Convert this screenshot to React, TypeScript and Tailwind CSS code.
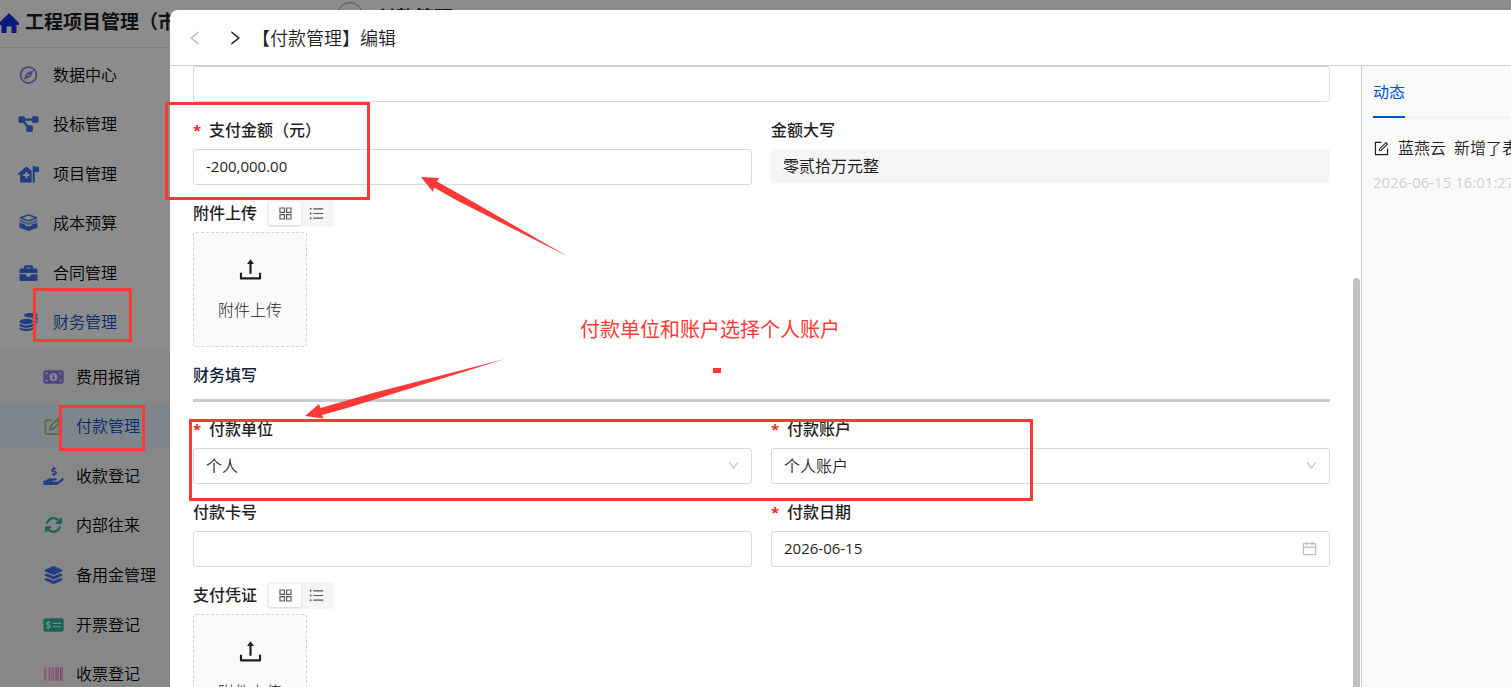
import type { ReactNode } from "react";
import type { IconType } from "react-icons";
import {
  AiOutlineAppstore,
  AiOutlineCalendar,
  AiOutlineDown,
  AiOutlineForm,
  AiOutlineLeft,
  AiOutlineRight,
  AiOutlineUnorderedList,
  AiOutlineUpload,
} from "react-icons/ai";
import { FaBarcode, FaBriefcase, FaCoins, FaHandHoldingUsd, FaLayerGroup, FaRegCompass } from "react-icons/fa";
import {
  FaArrowsRotate,
  FaDiagramProject,
  FaHouseMedicalFlag,
  FaMoneyBill1,
  FaMoneyCheckDollar,
  FaRegPenToSquare,
} from "react-icons/fa6";
import { LuChevronsLeft } from "react-icons/lu";

function OpenBox({ className }: { className?: string }) {
  return (
    <svg viewBox="0 0 22 20" className={className} fill="currentColor" aria-hidden="true">
      <path d="M11 1 20 4.2 11 7.6 2 4.2Z" fill="none" stroke="currentColor" strokeWidth="1.6" strokeLinejoin="round" />
      <path d="M1 5.6 11 9.4 21 5.6V9L11 12.6 1 9Z" fillOpacity=".55" />
      <path d="M1 9.6 6.5 11.5 8.6 13.6H13.4L15.5 11.5 21 9.6V15.4L11 19 1 15.4Z" />
    </svg>
  );
}

function HomeIcon({ className }: { className?: string }) {
  return (
    <svg viewBox="0 0 20 20" className={className} fill="currentColor" aria-hidden="true">
      <path d="M10 0 20 10V12H17.500V20H12.500V13.500H7.500V20H2.500V12H0V10Z" />
    </svg>
  );
}

type Item = { label: string; icon: IconType | typeof OpenBox; color: string; active?: boolean };

const mainItems: Item[] = [
  { label: "数据中心", icon: FaRegCompass, color: "text-[#8f78f0]" },
  { label: "投标管理", icon: FaDiagramProject, color: "text-[#3b71e8]" },
  { label: "项目管理", icon: FaHouseMedicalFlag, color: "text-[#3b71e8]" },
  { label: "成本预算", icon: OpenBox, color: "text-[#3b71e8]" },
  { label: "合同管理", icon: FaBriefcase, color: "text-[#3b71e8]" },
  { label: "财务管理", icon: FaCoins, color: "text-[#3b71e8]", active: true },
];

const subItems: Item[] = [
  { label: "费用报销", icon: FaMoneyBill1, color: "text-[#8f78f0]" },
  { label: "付款管理", icon: FaRegPenToSquare, color: "text-[#93c772]", active: true },
  { label: "收款登记", icon: FaHandHoldingUsd, color: "text-[#3b71e8]" },
  { label: "内部往来", icon: FaArrowsRotate, color: "text-[#2bb795]" },
  { label: "备用金管理", icon: FaLayerGroup, color: "text-[#3b71e8]" },
  { label: "开票登记", icon: FaMoneyCheckDollar, color: "text-[#2bb795]" },
  { label: "收票登记", icon: FaBarcode, color: "text-[#e86fb0]" },
];

function Sidebar() {
  return (
    <aside className="w-60 shrink-0 bg-white">
      <div className="flex h-12 items-center gap-1.5 border-b border-[#e4e4e4] pb-0.5">
        <HomeIcon className="-ml-px size-5 text-[#1632e0]" />
        <span className="text-[19px] font-bold whitespace-nowrap">工程项目管理（市</span>
      </div>
      <nav className="pt-0.5 font-[350] text-black">
        <ul className="grid h-[297px] grid-rows-6">
          {mainItems.map(({ label, icon: Icon, color, active }) => (
            <li key={label}>
              <a href="#" className="flex h-full items-center gap-3.5 pl-[18px]">
                <Icon className={`h-[18px] w-[21px] ${color}`} />
                <span className={active ? "text-[#0052cc]" : ""}>{label}</span>
              </a>
            </li>
          ))}
        </ul>
        <ul className="mt-0.5 grid h-[353px] grid-rows-7 bg-[#f6f6f6] pt-[3px] pb-[3px]">
          {subItems.map(({ label, icon: Icon, color, active }) => (
            <li key={label} className="flex items-center">
              <a href="#" className={`flex h-[45px] w-full items-center gap-3 pl-[43px] ${active ? "bg-[#e6f4ff]" : ""}`}>
                <Icon className={`h-[18px] w-[21px] ${color}`} />
                <span className={active ? "text-[#0052cc]" : ""}>{label}</span>
              </a>
            </li>
          ))}
        </ul>
      </nav>
    </aside>
  );
}

const labelText = "flex h-[38px] items-center font-medium";
const controlBase =
  "block h-9 w-full shrink-0 appearance-none rounded-[3px] border border-[#d9d9d9] bg-white px-3 outline-none";
const textControl = `${controlBase} pb-0.5 text-[15px]`;
const selectControl = `${controlBase} font-[350]`;

function Star() {
  return <span className="w-4 text-[15px] font-bold text-[#ff1f1f]">*</span>;
}

function Field({ id, label, required, children }: { id: string; label: string; required?: boolean; children: ReactNode }) {
  return (
    <div>
      <label htmlFor={id} className={labelText}>
        {required && <Star />}
        {label}
      </label>
      <div className="relative">{children}</div>
    </div>
  );
}

function Upload({ label }: { label: string }) {
  return (
    <section>
      <div className={labelText}>
        <span>{label}</span>
        <div className="ml-2.5 flex h-[27px] w-[67px] rounded-[3px] bg-[#f5f5f5] p-0.5 text-[#555]">
          <button type="button" aria-label="网格" className="flex w-8 items-center justify-center rounded-[2px] bg-white shadow-sm">
            <AiOutlineAppstore className="size-[17px]" />
          </button>
          <button type="button" aria-label="列表" className="flex flex-1 items-center justify-center">
            <AiOutlineUnorderedList className="size-[17px]" />
          </button>
        </div>
      </div>
      <button
        type="button"
        className="flex h-[115px] w-[114px] flex-col items-center justify-center gap-3.5 rounded-[3px] border border-dashed border-[#d4d4d4] bg-[#fafafa] pb-0.5 font-light"
      >
        <AiOutlineUpload className="size-[29px]" />
        <span className="leading-6">附件上传</span>
      </button>
    </section>
  );
}

function PaymentForm() {
  return (
    <form className="flex min-w-0 flex-1 flex-col gap-[9px] pr-[23px] pl-[23px]">
      <input aria-label="备注" className={textControl} />
      <div className="grid grid-cols-2 gap-x-[19px]">
        <Field id="amount" label="支付金额（元）" required>
          <input id="amount" defaultValue="-200,000.00" className={textControl} />
        </Field>
        <Field id="capital" label="金额大写">
          <output id="capital" className="flex h-[34px] items-center rounded-[3px] bg-[#f5f5f5] px-3">
            零贰拾万元整
          </output>
        </Field>
      </div>
      <Upload label="附件上传" />
      <h2 className="mb-[-1px] border-b-3 border-[#c9ccd3] pb-[5px] text-[#141f38]">
        <span className={labelText}>财务填写</span>
      </h2>
      <div className="grid grid-cols-2 gap-x-[19px] gap-y-[9px]">
        <Field id="unit" label="付款单位" required>
          <select id="unit" className={selectControl}>
            <option>个人</option>
          </select>
          <AiOutlineDown className="pointer-events-none absolute top-[11px] right-3 size-[13px] text-[#bdbdbd]" />
        </Field>
        <Field id="account" label="付款账户" required>
          <select id="account" className={selectControl}>
            <option>个人账户</option>
          </select>
          <AiOutlineDown className="pointer-events-none absolute top-[11px] right-3 size-[13px] text-[#bdbdbd]" />
        </Field>
        <Field id="card" label="付款卡号">
          <input id="card" className={textControl} />
        </Field>
        <Field id="date" label="付款日期" required>
          <input id="date" defaultValue="2026-06-15" className={textControl} />
          <AiOutlineCalendar className="pointer-events-none absolute top-[9px] right-3 size-[17px] text-[#bdbdbd]" />
        </Field>
      </div>
      <Upload label="支付凭证" />
    </form>
  );
}

function Activity() {
  return (
    <aside className="w-[150px] shrink-0 overflow-hidden border-l border-[#cccccc] bg-[#fafafa] pl-[11px] whitespace-nowrap">
      <div className="flex h-[52px] border-b border-[#f0f0f0]">
        <button type="button" className="-mb-px border-b-2 border-[#0052cc] pt-0.5 text-[#0052cc]">
          动态
        </button>
      </div>
      <p className="mt-[18px] flex h-6 items-center font-[350]">
        <AiOutlineForm className="mr-2 size-[17px] shrink-0" />
        <span>蓝燕云</span>
        <span className="ml-2">新增了表单</span>
      </p>
      <time className="mt-2.5 block text-[15px] leading-6 text-[#cfcfcf]">2026-06-15 16:01:27</time>
    </aside>
  );
}

function Annotations() {
  return (
    <div className="pointer-events-none absolute inset-0 text-[#fb3a38]">
      <div className="absolute top-[102px] left-[165px] h-[98px] w-[205px] border-3 border-current" />
      <div className="absolute top-[288px] left-[33px] h-[54px] w-[99px] border-3 border-current" />
      <div className="absolute top-[405px] left-[59px] h-[46px] w-[86px] border-3 border-current" />
      <div className="absolute top-[419px] left-[189px] h-[82px] w-[844px] border-3 border-current" />
      <div className="absolute top-[368px] left-[713px] h-[5px] w-2 bg-current" />
      <p className="absolute top-[315px] left-[580px] text-xl leading-[30px] whitespace-nowrap">付款单位和账户选择个人账户</p>
      <svg className="absolute top-[170px] left-[415px] h-[90px] w-[160px]" viewBox="415 170 160 90" fill="currentColor">
        <path d="M421 177 439 178 437 181.5 469 199.5 568 256.5 457 200.5 434 187.5 433 192Z" />
      </svg>
      <svg className="absolute top-[355px] left-[300px] h-[70px] w-[210px]" viewBox="300 355 210 70" fill="currentColor">
        <path d="M305 416 319 404 320.5 408 373 393 505 359 373 400 347 408 322 415 323.5 418.5Z" />
      </svg>
    </div>
  );
}

export default function App() {
  return (
    <div className="relative h-screen overflow-hidden bg-white font-['Open_Sans','Noto_Sans_CJK_SC',sans-serif] text-base text-[#1f1f1f]">
      <div className="flex h-full overflow-hidden">
        <Sidebar />
        <header className="flex h-9 flex-1 items-start gap-3.5 pt-0.5 pl-[97px]">
          <span className="flex size-[26px] shrink-0 items-center justify-center rounded-full border border-[#999]">
            <LuChevronsLeft className="size-4" />
          </span>
          <h1 className="pt-0.5 text-[19px] font-bold">付款管理</h1>
        </header>
      </div>
      <div className="absolute inset-0 bg-black/45" />
      <div
        role="dialog"
        aria-label="付款管理"
        className="absolute top-2.5 right-0 bottom-0 left-[170px] flex flex-col overflow-hidden rounded-tl-lg bg-white"
      >
        <div className="flex h-14 shrink-0 items-center border-b border-[#cfcfcf] pl-4">
          <button type="button" aria-label="上一条" className="mr-[22px] text-[#bfbfbf]">
            <AiOutlineLeft className="size-[18px]" />
          </button>
          <button type="button" aria-label="下一条" className="mr-2">
            <AiOutlineRight className="size-[18px]" />
          </button>
          <h2 className="text-lg font-[350]">【付款管理】编辑</h2>
        </div>
        <div className="flex min-h-0 flex-1 overflow-hidden">
          <PaymentForm />
          <div className="mr-px w-[7px] shrink-0 pt-[212px]">
            <div className="h-full rounded-t-full bg-[#c1c1c8]" />
          </div>
          <Activity />
        </div>
      </div>
      <Annotations />
    </div>
  );
}
